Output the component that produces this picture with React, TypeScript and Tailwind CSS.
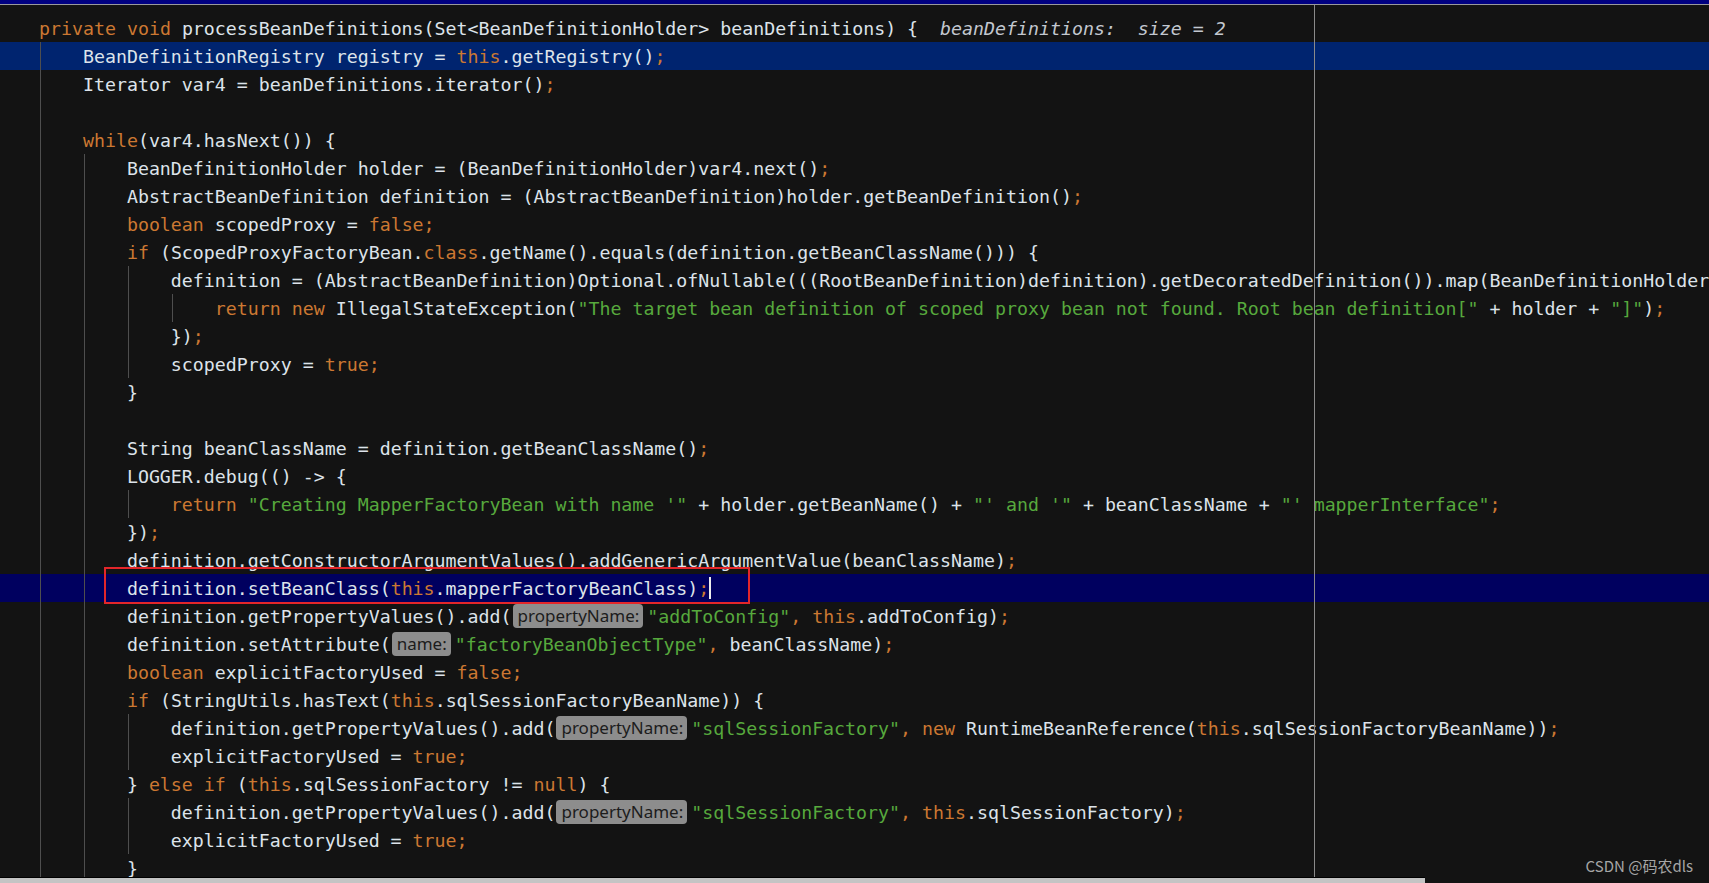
import React from 'react';

type Line = {
  code: string;
  guides: number[];
  bg?: string;
  debug?: string;
  caret?: boolean;
  boxed?: boolean;
};

const KEYWORDS = new Set([
  'private', 'void', 'while', 'boolean', 'false', 'true', 'if', 'return',
  'new', 'class', 'this', 'else', 'null',
]);

// full class names for the indent guides (4 columns of 11px each)
const GUIDE_LEFT = ['left-[40px]', 'left-[84px]', 'left-[128px]', 'left-[172px]'];

const LINES: Line[] = [
  { code: 'private void processBeanDefinitions(Set<BeanDefinitionHolder> beanDefinitions) {', guides: [], debug: 'beanDefinitions:  size = 2' },
  { code: '    BeanDefinitionRegistry registry = this.getRegistry();', guides: [0], bg: 'bg-[#00246f]' },
  { code: '    Iterator var4 = beanDefinitions.iterator();', guides: [0] },
  { code: '', guides: [0] },
  { code: '    while(var4.hasNext()) {', guides: [0] },
  { code: '        BeanDefinitionHolder holder = (BeanDefinitionHolder)var4.next();', guides: [0, 1] },
  { code: '        AbstractBeanDefinition definition = (AbstractBeanDefinition)holder.getBeanDefinition();', guides: [0, 1] },
  { code: '        boolean scopedProxy = false;', guides: [0, 1] },
  { code: '        if (ScopedProxyFactoryBean.class.getName().equals(definition.getBeanClassName())) {', guides: [0, 1] },
  { code: '            definition = (AbstractBeanDefinition)Optional.ofNullable(((RootBeanDefinition)definition).getDecoratedDefinition()).map(BeanDefinitionHolder::getBeanDefinition).orElseThrow(() -> {', guides: [0, 1, 2] },
  { code: '                return new IllegalStateException("The target bean definition of scoped proxy bean not found. Root bean definition[" + holder + "]");', guides: [0, 1, 2, 3] },
  { code: '            });', guides: [0, 1, 2] },
  { code: '            scopedProxy = true;', guides: [0, 1, 2] },
  { code: '        }', guides: [0, 1] },
  { code: '', guides: [0, 1] },
  { code: '        String beanClassName = definition.getBeanClassName();', guides: [0, 1] },
  { code: '        LOGGER.debug(() -> {', guides: [0, 1] },
  { code: '            return "Creating MapperFactoryBean with name \'" + holder.getBeanName() + "\' and \'" + beanClassName + "\' mapperInterface";', guides: [0, 1, 2] },
  { code: '        });', guides: [0, 1] },
  { code: '        definition.getConstructorArgumentValues().addGenericArgumentValue(beanClassName);', guides: [0, 1] },
  { code: '        definition.setBeanClass(this.mapperFactoryBeanClass);', guides: [0, 1], bg: 'bg-[#00005f]', caret: true, boxed: true },
  { code: '        definition.getPropertyValues().add(⟪propertyName:⟫"addToConfig", this.addToConfig);', guides: [0, 1] },
  { code: '        definition.setAttribute(⟪name:⟫"factoryBeanObjectType", beanClassName);', guides: [0, 1] },
  { code: '        boolean explicitFactoryUsed = false;', guides: [0, 1] },
  { code: '        if (StringUtils.hasText(this.sqlSessionFactoryBeanName)) {', guides: [0, 1] },
  { code: '            definition.getPropertyValues().add(⟪propertyName:⟫"sqlSessionFactory", new RuntimeBeanReference(this.sqlSessionFactoryBeanName));', guides: [0, 1, 2] },
  { code: '            explicitFactoryUsed = true;', guides: [0, 1, 2] },
  { code: '        } else if (this.sqlSessionFactory != null) {', guides: [0, 1] },
  { code: '            definition.getPropertyValues().add(⟪propertyName:⟫"sqlSessionFactory", this.sqlSessionFactory);', guides: [0, 1, 2] },
  { code: '            explicitFactoryUsed = true;', guides: [0, 1, 2] },
  { code: '        }', guides: [0, 1] },
];

function highlight(code: string) {
  const out: React.ReactNode[] = [];
  const re = /(⟪[^⟫]*⟫)|("(?:[^"\\]|\\.)*")|([A-Za-z_][A-Za-z0-9_]*)|([;,])|([^⟪"A-Za-z_;,]+)/g;
  let m: RegExpExecArray | null;
  let i = 0;
  while ((m = re.exec(code))) {
    const k = i++;
    if (m[1]) {
      out.push(
        <span
          key={k}
          className="ml-[1px] mr-[4px] mt-[2px] inline-block h-[24px] rounded-[4px] bg-[#8d8d8d] pl-[5px] pr-[4px] align-top font-['Noto_Sans',sans-serif] text-[17px] leading-[24px] text-[#1c1c1c]"
        >
          {m[1].slice(1, -1)}
        </span>
      );
    } else if (m[2]) {
      out.push(<span key={k} className="text-[#57a93d]">{m[2]}</span>);
    } else if (m[3]) {
      out.push(
        KEYWORDS.has(m[3])
          ? <span key={k} className="text-[#cc7832]">{m[3]}</span>
          : <React.Fragment key={k}>{m[3]}</React.Fragment>
      );
    } else if (m[4]) {
      out.push(<span key={k} className="text-[#cc7832]">{m[4]}</span>);
    } else {
      out.push(<React.Fragment key={k}>{m[5]}</React.Fragment>);
    }
  }
  return out;
}

export default function App() {
  return (
    <div className="relative h-screen w-screen overflow-hidden bg-[#131313]">
      <div className="h-[4px] bg-[#000080]" />
      <div className="h-px bg-[#9a9a9a]" />

      {/* editor lines */}
      <div className="pt-[9px] font-['DejaVu_Sans_Mono',monospace] text-[18.25px] text-[#dde3ea]">
        {LINES.map((line, idx) => (
          <div key={idx} className={`relative h-[28px] ${line.bg ?? ''}`}>
            <div className="whitespace-pre pl-[39px] leading-[30px]">
              {highlight(line.code)}
              {line.caret && (
                <span className="mt-[3px] inline-block h-[22px] w-[2px] align-top bg-[#ececec]" />
              )}
              {line.debug && (
                <span className="italic text-[#c3c8d0]">{'  ' + line.debug}</span>
              )}
            </div>
            {line.guides.map((g) => (
              <span key={g} className={`absolute top-0 bottom-0 w-px bg-[#4e4e4e] ${GUIDE_LEFT[g]}`} />
            ))}
            {line.boxed && (
              <div className="absolute left-[104px] top-[-7px] h-[37px] w-[646px] border-2 border-[#e3262a]" />
            )}
          </div>
        ))}
      </div>

      {/* right margin */}
      <div className="absolute left-[1314px] top-[5px] bottom-0 w-px bg-[#8a8a8a]" />

      {/* horizontal scrollbar */}
      <div className="absolute bottom-0 left-0 h-[6px] w-[1425px] border-t border-black bg-[#c4c4c4]" />

      <div className="absolute bottom-[7px] right-[16px] font-['Noto_Sans_CJK_SC',sans-serif] text-[15px] leading-[20px] text-[#a6a6a6]">
        CSDN @码农dls
      </div>
    </div>
  );
}
